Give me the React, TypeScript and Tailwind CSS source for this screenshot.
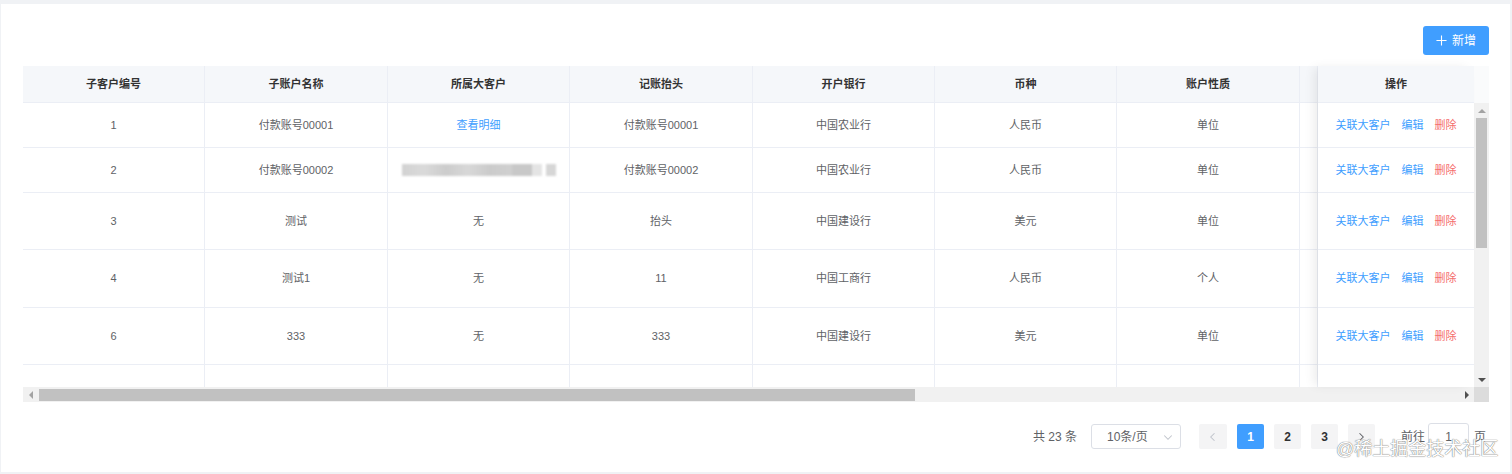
import { ReactNode } from "react";

interface Row {
  id: string;
  name: string;
  owner: ReactNode;
  head: string;
  bank: string;
  currency: string;
  kind: string;
  h: string;
}

const blurBar = (
  <div className="flex h-[12px] w-[154px] items-center blur-[1px]">
    <div className="h-full w-[110px] bg-[linear-gradient(90deg,#d2d2d2,#dadada_20%,#cccccc_40%,#d8d8d8_60%,#cbcbcb_80%,#d0d0d0)]" />
    <div className="h-full w-[20px] bg-[#c8c8c8]" />
    <div className="h-full w-[10px] bg-[#e4e4e4]" />
    <div className="ml-[4px] h-full w-[10px] bg-[#d6d6d6]" />
  </div>
);

const rows: Row[] = [
  { id: "1", name: "付款账号00001", owner: <span className="text-[#409eff]">查看明细</span>, head: "付款账号00001", bank: "中国农业行", currency: "人民币", kind: "单位", h: "h-[45px]" },
  { id: "2", name: "付款账号00002", owner: blurBar, head: "付款账号00002", bank: "中国农业行", currency: "人民币", kind: "单位", h: "h-[45px]" },
  { id: "3", name: "测试", owner: "无", head: "抬头", bank: "中国建设行", currency: "美元", kind: "单位", h: "h-[57px]" },
  { id: "4", name: "测试1", owner: "无", head: "11", bank: "中国工商行", currency: "人民币", kind: "个人", h: "h-[58px]" },
  { id: "6", name: "333", owner: "无", head: "333", bank: "中国建设行", currency: "美元", kind: "单位", h: "h-[57px]" },
];

const widths = ["w-[182px]", "w-[183px]", "w-[182px]", "w-[183px]", "w-[182px]", "w-[182px]", "w-[183px]", "w-[18px]"];
const headers = ["子客户编号", "子账户名称", "所属大客户", "记账抬头", "开户银行", "币种", "账户性质", ""];

function Cell({ w, children }: { w: string; children?: ReactNode }) {
  return (
    <div className={`${w} flex shrink-0 items-center justify-center border-r border-[#ebeef5]`}>
      {children}
    </div>
  );
}

function Tri({ dir }: { dir: "up" | "down" | "left" | "right" }) {
  const cls =
    dir === "up"
      ? "border-x-[4px] border-b-[4px] border-x-transparent border-b-[#a3a3a3]"
      : dir === "down"
      ? "border-x-[4px] border-t-[4px] border-x-transparent border-t-[#505050]"
      : dir === "left"
      ? "border-y-[4px] border-r-[4px] border-y-transparent border-r-[#a3a3a3]"
      : "border-y-[4px] border-l-[4px] border-y-transparent border-l-[#505050]";
  return <div className={`h-0 w-0 ${cls}`} />;
}

function Chevron({ dir, color }: { dir: "left" | "right" | "down"; color: string }) {
  const d = dir === "left" ? "M10 3 L5 8 L10 13" : dir === "right" ? "M6 3 L11 8 L6 13" : "M3 6 L8 11 L13 6";
  return (
    <svg width="12" height="12" viewBox="0 0 16 16" fill="none" stroke={color} strokeWidth="1.4">
      <path d={d} />
    </svg>
  );
}

export default function App() {
  return (
    <div className="h-[474px] bg-[#f0f2f5] pt-[4px] pr-[2px] pl-px font-['Liberation_Sans','Noto_Sans_CJK_SC',sans-serif]">
      <div className="relative h-[468px] bg-white pt-[22px] pl-[22px] pr-[21px]">
        <div className="flex justify-end">
          <button className="flex h-[29px] w-[66px] items-center justify-center gap-[5px] rounded-[3px] bg-[#409eff] text-[12px] text-white">
            <svg width="11" height="11" viewBox="0 0 12 12" stroke="white" strokeWidth="1.2">
              <path d="M6 0.5 V11.5 M0.5 6 H11.5" />
            </svg>
            新增
          </button>
        </div>

        <div className="mt-[11px] w-[1466px] text-[11px] text-[#606266]">
          <div className="flex h-[321px]">
            <div className="w-[1295px] overflow-hidden">
              <div className="flex h-[37px] border-b border-[#ebeef5] bg-[#f5f7fa] font-bold text-[#333]">
                {headers.map((t, i) => (
                  <Cell key={i} w={widths[i]}>{t}</Cell>
                ))}
              </div>
              {rows.map((r) => (
                <div key={r.id} className={`flex ${r.h} border-b border-[#ebeef5]`}>
                  <Cell w={widths[0]}>{r.id}</Cell>
                  <Cell w={widths[1]}>{r.name}</Cell>
                  <Cell w={widths[2]}>{r.owner}</Cell>
                  <Cell w={widths[3]}>{r.head}</Cell>
                  <Cell w={widths[4]}>{r.bank}</Cell>
                  <Cell w={widths[5]}>{r.currency}</Cell>
                  <Cell w={widths[6]}>{r.kind}</Cell>
                  <Cell w={widths[7]} />
                </div>
              ))}
              <div className="flex h-[22px]">
                {widths.map((w, i) => (
                  <Cell key={i} w={w} />
                ))}
              </div>
            </div>

            <div className="relative z-10 w-[156px] shrink-0 bg-white shadow-[-6px_0_10px_-2px_rgba(0,0,0,0.08)]">
              <div className="flex h-[37px] items-center justify-center border-b border-[#ebeef5] bg-[#f5f7fa] font-bold text-[#333]">
                操作
              </div>
              {rows.map((r) => (
                <div key={r.id} className={`flex ${r.h} items-center justify-center gap-[11px] border-b border-[#ebeef5]`}>
                  <span className="text-[#409eff]">关联大客户</span>
                  <span className="text-[#409eff]">编辑</span>
                  <span className="text-[#f56c6c]">删除</span>
                </div>
              ))}
            </div>

            <div className="flex w-[15px] shrink-0 flex-col">
              <div className="h-[37px] bg-[#fafbfc]" />
              <div className="flex flex-1 flex-col items-center bg-[#f1f1f1]">
                <div className="flex h-[15px] w-full items-center justify-center">
                  <Tri dir="up" />
                </div>
                <div className="h-[130px] w-[11px] bg-[#c1c1c1]" />
                <div className="flex-1" />
                <div className="flex h-[15px] w-full items-center justify-center">
                  <Tri dir="down" />
                </div>
              </div>
            </div>
          </div>

          <div className="flex h-[15px]">
            <div className="flex w-[1451px] items-center bg-[#f1f1f1]">
              <div className="flex h-full w-[15px] items-center justify-center">
                <Tri dir="left" />
              </div>
              <div className="ml-px h-[12px] w-[876px] bg-[#c1c1c1]" />
              <div className="flex-1" />
              <div className="flex h-full w-[15px] items-center justify-center">
                <Tri dir="right" />
              </div>
            </div>
            <div className="w-[15px] bg-[#dcdcdc]" />
          </div>
        </div>

        <div className="mt-[22px] flex h-[25px] items-center justify-end pr-[3px] text-[12px] text-[#606266]">
          <span className="mr-[14px]">共 23 条</span>
          <div className="mr-[18px] flex h-[25px] w-[90px] items-center justify-between rounded-[3px] border border-[#dcdfe6] pl-[15px] pr-[6px]">
            <span>10条/页</span>
            <Chevron dir="down" color="#c0c4cc" />
          </div>
          <div className="flex h-[25px] w-[28px] items-center justify-center rounded-[2px] bg-[#f4f4f5]">
            <Chevron dir="left" color="#c0c4cc" />
          </div>
          <div className="ml-[10px] flex h-[25px] w-[27px] items-center justify-center rounded-[2px] bg-[#409eff] font-bold text-white">1</div>
          <div className="ml-[10px] flex h-[25px] w-[27px] items-center justify-center rounded-[2px] bg-[#f4f4f5] font-bold text-[#303133]">2</div>
          <div className="ml-[10px] flex h-[25px] w-[27px] items-center justify-center rounded-[2px] bg-[#f4f4f5] font-bold text-[#303133]">3</div>
          <div className="ml-[10px] flex h-[25px] w-[27px] items-center justify-center rounded-[2px] bg-[#f4f4f5]">
            <Chevron dir="right" color="#606266" />
          </div>
          <span className="ml-[26px]">前往</span>
          <div className="ml-[3px] flex h-[27px] w-[41px] items-center justify-center rounded-[3px] border border-[#dcdfe6]">1</div>
          <span className="ml-[5px]">页</span>
        </div>

        <div className="pointer-events-none absolute left-[1335px] top-[432px] text-[18px] text-white [text-shadow:0_0_1px_#777,0_0_1px_#777]">
          @稀土掘金技术社区
        </div>
      </div>
    </div>
  );
}
